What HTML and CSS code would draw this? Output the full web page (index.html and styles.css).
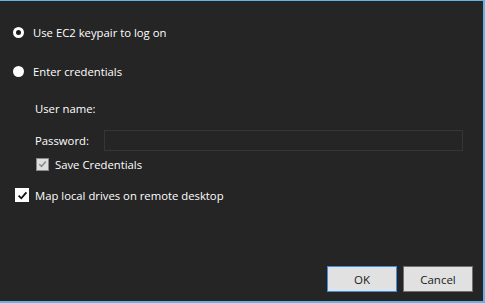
FILE: index.html
```html
<!DOCTYPE html>
<html>
<head>
<meta charset="utf-8">
<link rel="stylesheet" href="styles.css">
</head>
<body>
<div class="dialog">
  <div class="content">
    <div class="option opt1">
      <span class="radio checked"></span>
      <span class="label">Use EC2 keypair to log on</span>
    </div>
    <div class="option opt2">
      <span class="radio"></span>
      <span class="label">Enter credentials</span>
    </div>
    <div class="creds">
      <div class="field user"><span class="flabel">User name:</span></div>
      <div class="field pass"><span class="flabel">Password:</span><span class="input"></span></div>
      <div class="check save">
        <span class="box disabled"><svg viewBox="0 0 12 12" width="12" height="12"><path d="M2.5 6.2 L5 8.6 L9.6 3.2" fill="none" stroke="#888" stroke-width="1.6"/></svg></span>
        <span class="label">Save Credentials</span>
      </div>
    </div>
    <div class="check map">
      <span class="box"><svg viewBox="0 0 13 13" width="13" height="13"><path d="M2.6 6.6 L5.3 9.3 L10.4 3.4" fill="none" stroke="#111" stroke-width="1.8"/></svg></span>
      <span class="label">Map local drives on remote desktop</span>
    </div>
  </div>
  <div class="buttons">
    <button class="btn ok">OK</button>
    <button class="btn cancel">Cancel</button>
  </div>
</div>
</body>
</html>
```

FILE: styles.css
```css
html, body {
  margin: 0;
  padding: 0;
  background: #252525;
}
.dialog {
  width: 483px;
  height: 300px;
  background: #252525;
  border-top: 1px solid #63b4e4;
  border-right: 2px solid #63b4e4;
  border-bottom: 2px solid #63b4e4;
  font-family: "Open Sans", "Noto Sans", sans-serif;
  font-size: 11.3px;
  color: #ffffff;
  display: flex;
  flex-direction: column;
  justify-content: space-between;
}
.content {
  padding: 0 0 0 13px;
}
.option {
  display: flex;
  align-items: center;
  height: 16px;
}
.opt1 { margin-top: 23px; }
.opt2 { margin-top: 23px; }
.radio {
  width: 11px;
  height: 11px;
  border-radius: 50%;
  background: #ffffff;
  box-sizing: border-box;
  margin-right: 9px;
  flex: none;
}
.radio.checked {
  border: 3px solid #ffffff;
  background: #1a1a1a;
}
.creds {
  padding-left: 22px;
  margin-top: 19px;
}
.field {
  display: flex;
  align-items: center;
  height: 21px;
}
.pass { margin-top: 11px; }
.flabel {
  width: 69px;
  flex: none;
}
.input {
  width: 359px;
  height: 21px;
  box-sizing: border-box;
  border: 1px solid #363636;
  background: #252525;
}
.check {
  display: flex;
  align-items: center;
  height: 16px;
}
.save { margin-top: 5px; margin-left: 1px; }
.map { margin-top: 15px; margin-left: 2px; }
.box {
  width: 14px;
  height: 14px;
  background: #ffffff;
  display: flex;
  align-items: center;
  justify-content: center;
  box-sizing: border-box;
  margin-right: 6px;
  flex: none;
}
.box.disabled {
  width: 13px;
  height: 13px;
  background: #dedede;
  border: 1px solid #8a8a8a;
}
.buttons {
  display: flex;
  justify-content: flex-end;
  gap: 6px;
  padding: 0 10px 9px 0;
}
.btn {
  width: 70px;
  height: 26px;
  box-sizing: border-box;
  background: #e1e1e1;
  border: 1px solid #707070;
  font-family: "Open Sans", "Noto Sans", sans-serif;
  font-size: 11.5px;
  color: #1a1a1a;
  padding: 0;
}
.btn.ok {
  border-color: #3d8ee3;
}
```
